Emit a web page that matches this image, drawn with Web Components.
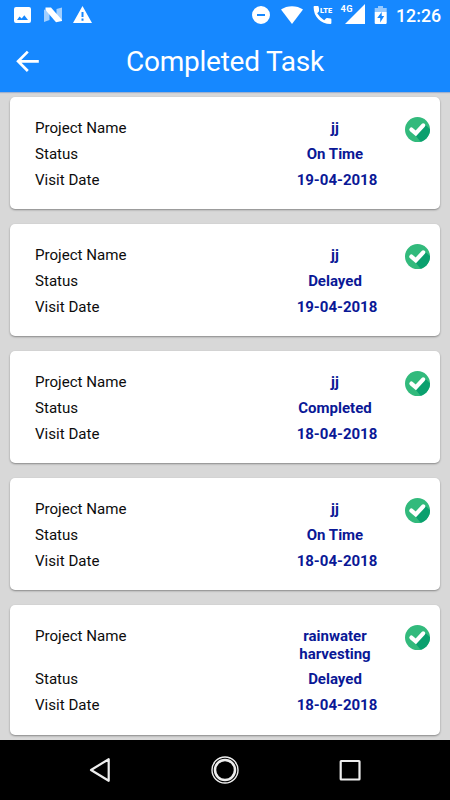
<!DOCTYPE html>
<html lang="en">
<head>
<meta charset="utf-8">
<title>Completed Task</title>
<style>
body{margin:0;background:#d8d8d8;font-family:Roboto,sans-serif}
</style>
</head>
<body>
<task-app></task-app>
<script>
const define=(name,html,setup)=>customElements.define(name,class extends HTMLElement{
  connectedCallback(){
    if(this.shadowRoot)return;
    const t=document.createElement('template');
    t.innerHTML=html;
    this.attachShadow({mode:'open'}).append(t.content.cloneNode(true));
    if(setup)setup(this,this.shadowRoot);
  }
});

define('status-bar',`<style>
:host{display:flex;align-items:flex-start;height:32px;box-sizing:border-box;padding:6px 10px 0 14px;color:#fff}
svg{display:block;fill:#fff;flex:none}
.gap{flex:1}
.clock{font-size:17.8px;line-height:20px;font-weight:500;width:44px;white-space:nowrap;margin-left:9px}
</style>
<svg width="17" height="18" viewBox="0 0 17 18"><path fill-rule="evenodd" d="M2 1H15a2 2 0 0 1 2 2V15a2 2 0 0 1-2 2H2a2 2 0 0 1-2-2V3a2 2 0 0 1 2-2ZM3 14H14L10.3 9.3 7.7 12.5 5.5 10.5Z"/></svg>
<svg width="18" height="18" viewBox="0 0 18 18" style="margin-left:13px"><path opacity=".6" d="M0 3.5 5.5 6V14L0 16ZM12.5 3 18 1.5V14L12.5 11Z"/><path d="M1.5 1.5H7L18 14V15L12 16.2 1.5 4Z"/></svg>
<svg width="20" height="18" viewBox="0 0 20 18" style="margin-left:11px"><path fill-rule="evenodd" d="M9.5 0 19 17H0ZM8.5 6V11H10.5V6ZM8.5 12.5V14.7H10.5V12.5Z"/></svg>
<div class="gap"></div>
<svg width="18" height="18" viewBox="0 0 18 18"><path fill-rule="evenodd" d="M9 0a9 9 0 1 0 0 18A9 9 0 1 0 9 0ZM5 8H13V10H5Z"/></svg>
<svg width="22" height="18" viewBox="0 0 22 18" style="margin-left:11px"><path d="M0 3.5C6-1 16-1 22 3.5L11 18Z"/></svg>
<svg width="20" height="20" viewBox="0 0 20 20" style="margin-left:10px;margin-top:-2px"><path d="M1.4 2H4.8Q5.6 2 5.7 3L6.3 6.5Q6.3 7.1 5.9 7.5L4.2 9.3Q7 14 11.2 16.2L13.2 14.2Q13.7 13.8 14.2 13.9L17.6 14.6Q18.4 14.8 18.4 15.6V19Q18.4 20 17.4 20C8 20 .6 13 .6 3Q.6 2 1.4 2Z"/><path fill="#1688ff" d="M6 1H20V9.5H6.6L6 8Z"/><text x="7" y="8.7" font-family="Roboto" font-weight="900" font-size="8" textLength="12" lengthAdjust="spacingAndGlyphs">LTE</text></svg>
<svg width="26" height="20" viewBox="0 0 26 20" style="margin-left:7px;margin-top:-2px"><path d="M25 0V20H5Z"/><path fill="#1688ff" d="M0 0H13.5V10.2H0Z"/><text x=".5" y="8.2" font-family="Roboto" font-weight="700" font-size="9.2" textLength="12">4G</text></svg>
<svg width="13" height="18" viewBox="0 0 13 18" style="margin-left:8px"><path opacity=".55" d="M4 0H9V2H12.7V6H.7V2H4Z"/><path fill-rule="evenodd" d="M.7 6H12.7V17.2L11.9 18H1.5L.7 17.2ZM7.7 6 3.2 12H6.2V16.5L10.2 10H7.7Z"/></svg>
<span class="clock">12:26</span>`);

define('title-bar',`<style>
:host{display:grid;grid-template-columns:50px 1fr 50px;align-items:center;height:60px;color:#fff}
svg{display:block;margin-left:16px}
h1{margin:0;text-align:center;font-size:28px;line-height:34px;font-weight:400;white-space:nowrap;letter-spacing:-.25px}
</style>
<svg width="24" height="24" viewBox="0 0 24 24" fill="none" stroke="#fff" stroke-width="2.7"><path d="M22.8 11.3H2.5M11.8 1.6 2.1 11.3l9.7 9.7"/></svg>
<h1><slot></slot></h1>`);

define('done-badge',`<style>:host{display:block;width:26px;height:26px}svg{display:block}</style>
<svg width="26" height="26" viewBox="0 0 26 26"><defs><clipPath id="c"><circle cx="12.5" cy="12.6" r="12.5"/></clipPath></defs><circle cx="12.5" cy="12.6" r="12.5" fill="#32ba7c"/><path clip-path="url(#c)" fill="#0aa06e" d="M10.5 18.5 20.5 8 30 17V30H20Z"/><path d="M6.4 12.6 10.8 16.4 18.2 8.4" fill="none" stroke="#fff" stroke-width="4.2" stroke-linecap="round"/></svg>`);

define('task-field',`<style>
:host{display:grid;grid-template-columns:1fr 100px;font-size:15.1px;line-height:17.6px;color:#0c0c0c}
.v{color:#0a1896;font-weight:700;font-size:15px;text-align:center}
:host([date]) .v{padding-left:4px}
</style><span><slot name="label"></slot></span><span class="v"><slot></slot></span>`);

define('task-card',`<style>
:host{display:grid;grid-template-columns:350px 26px;column-gap:20px;box-sizing:border-box;padding:22.9px 9px 19.9px 25px;background:#fff;border-radius:5px;box-shadow:0 1px 2px rgba(0,0,0,.38)}
.rows{display:grid;row-gap:8.2px}
done-badge{margin-top:-3.3px}
</style>
<div class="rows"><task-field><span slot="label">Project Name</span><span id="n"></span></task-field>
<task-field><span slot="label">Status</span><span id="s"></span></task-field>
<task-field date><span slot="label">Visit Date</span><span id="d"></span></task-field></div>
<done-badge></done-badge>`,(el,root)=>{
  root.getElementById('n').textContent=el.getAttribute('name');
  root.getElementById('s').textContent=el.getAttribute('status');
  root.getElementById('d').textContent=el.getAttribute('date');
});

define('nav-bar',`<style>
:host{display:grid;grid-template-columns:repeat(3,125px);justify-content:center;justify-items:center;align-items:center;height:60px;background:#000}
svg{display:block;fill:none;stroke:#eee}
</style>
<svg width="30" height="30" viewBox="0 0 30 30" stroke-width="2.2"><path stroke-linejoin="round" d="M23.7 4.2V25.8L6 15Z"/></svg>
<svg width="30" height="30" viewBox="0 0 30 30"><circle cx="15" cy="15" r="13" stroke-width="1.4"/><circle cx="15" cy="15" r="10" stroke-width="2.5"/></svg>
<svg width="30" height="30" viewBox="0 0 30 30" stroke-width="2.2"><rect x="5.7" y="6" width="18.8" height="18.5" rx=".5"/></svg>`);

define('task-app',`<style>
:host{display:flex;flex-direction:column;height:800px;overflow:hidden;background:#d8d8d8}
header{height:92px;background:#1688ff;box-shadow:0 1px 1px rgba(80,120,190,.4);flex:none}
main{flex:1;min-height:0;overflow:hidden;display:flex;flex-direction:column;gap:15px;padding:5.4px 10px 0}
task-card{flex:none}
nav-bar{flex:none}
</style>
<header><status-bar></status-bar><title-bar>Completed Task</title-bar></header>
<main>
<task-card name="jj" status="On Time" date="19-04-2018"></task-card>
<task-card name="jj" status="Delayed" date="19-04-2018"></task-card>
<task-card name="jj" status="Completed" date="18-04-2018"></task-card>
<task-card name="jj" status="On Time" date="18-04-2018"></task-card>
<task-card name="rainwater harvesting" status="Delayed" date="18-04-2018"></task-card>
</main>
<nav-bar></nav-bar>`);
</script>
</body>
</html>
